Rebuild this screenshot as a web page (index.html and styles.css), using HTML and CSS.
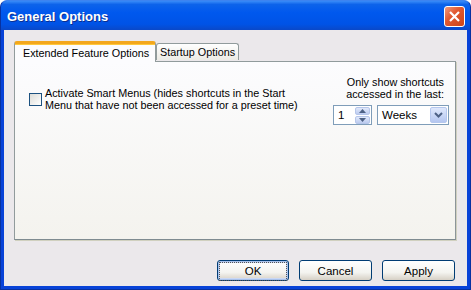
FILE: index.html
```html
<!doctype html>
<html lang="en">
    <head>
        <meta charset="utf-8">
        <title>General Options</title>
        <link rel="stylesheet" href="styles.css">
    </head>
    <body>
        <div class="window">
            <div class="window__title">
                <span class="window__caption">General Options</span>
                <div class="window__close">
                    <svg width="13" height="13" viewBox="0 0 13 13">
                        <path d="M2 2 L11 11 M11 2 L2 11" stroke="#fff" stroke-width="2.2"/>
                    </svg>
                </div>
            </div>
            <div class="window__client">
                <ul class="tabs">
                    <li class="tabs__item tabs__item--active">Extended Feature Options</li>
                    <li class="tabs__item">Startup Options</li>
                </ul>
                <div class="panel">
                    <label class="option">
                        <span class="option__box"></span>
                        <span class="option__text">Activate Smart Menus (hides shortcuts in the Start<br>Menu that have not been accessed for a preset time)</span>
                    </label>
                    <div class="period">
                        <div class="period__label">Only show shortcuts<br>accessed in the last:</div>
                        <div class="period__fields">
                            <div class="spin">
                                <span class="spin__value">1</span>
                                <div class="spin__buttons">
                                    <div class="spin__btn">
                                        <svg width="7" height="4" viewBox="0 0 7 4"><path d="M0 4 L3.5 0 L7 4 Z" fill="#4d6185"/></svg>
                                    </div>
                                    <div class="spin__btn">
                                        <svg width="7" height="4" viewBox="0 0 7 4"><path d="M0 0 L3.5 4 L7 0 Z" fill="#4d6185"/></svg>
                                    </div>
                                </div>
                            </div>
                            <div class="combo">
                                <span class="combo__value">Weeks</span>
                                <div class="combo__btn">
                                    <svg width="9" height="6" viewBox="0 0 9 6"><path d="M1 1 L4.5 4.5 L8 1" stroke="#4d6185" stroke-width="2" fill="none"/></svg>
                                </div>
                            </div>
                        </div>
                    </div>
                </div>
                <div class="actions">
                    <button class="btn btn--default"><span>OK</span></button>
                    <button class="btn"><span>Cancel</span></button>
                    <button class="btn"><span>Apply</span></button>
                </div>
            </div>
        </div>
    </body>
</html>
```

FILE: styles.css
```css
body {
    margin: 0;
    background: #fff;
    font-family: "Liberation Sans", Arial, sans-serif;
    font-size: 10.8px;
    color: #000;
}

.window {
    width: 471px;
    height: 290px;
    box-sizing: border-box;
    display: flex;
    flex-direction: column;
    background: #0842d8;
    border-radius: 7px 7px 0 0;
    border: 1px solid #0831a0;
    border-top-color: #3d84f0;
}

.window__title {
    height: 29px;
    display: flex;
    align-items: center;
    padding: 0 5px 0 6px;
    background: linear-gradient(#3a8cf8 0%, #0d63ea 12%, #0058ee 40%, #0053e6 80%, #0a48c8 100%);
    border-radius: 6px 6px 0 0;
}

.window__caption {
    flex: 1;
    font-family: "Liberation Sans", Arial, sans-serif;
    font-weight: bold;
    font-size: 13px;
    color: #fff;
    text-shadow: 1px 1px 0 #0b2f90;
    padding-top: 2px;
}

.window__close {
    width: 19px;
    height: 19px;
    display: flex;
    align-items: center;
    justify-content: center;
    border: 1px solid #fff;
    border-radius: 3px;
    background: linear-gradient(135deg, #f09a7e, #e25a32 40%, #cc4418);
    margin-top: 1px;
}

.window__client {
    flex: 1;
    margin: 0 3px 3px;
    background: #ebe8eb;
    padding: 12px 11px 0 10px;
    display: flex;
    flex-direction: column;
}

.tabs {
    display: flex;
    align-items: flex-end;
    list-style: none;
    margin: 0;
    padding: 0;
    height: 19px;
    position: relative;
    z-index: 1;
}

.tabs__item {
    box-sizing: border-box;
    height: 17px;
    padding: 2px 3px 0 3px;
    border: 1px solid #919b9c;
    border-bottom: none;
    border-radius: 3px 3px 0 0;
    background: linear-gradient(#fff, #ecebe5);
    margin-bottom: 1px;
}

.tabs__item--active {
    height: 21px;
    margin-bottom: -1px;
    padding: 3px 6px 0 8px;
    border-top: 3px solid #f3a71d;
    background: #fcfcfe;
    box-shadow: inset 0 1px 0 #ffc83c;
}

.panel {
    height: 179px;
    box-sizing: border-box;
    border: 1px solid #919b9c;
    border-right-color: #8c9599;
    border-bottom-color: #7f8b90;
    background: linear-gradient(#fcfcfe, #f4f3ee);
    display: flex;
    justify-content: space-between;
    padding: 13px 11px 0 14px;
    box-shadow: 1px 1px 0 #d0d0bf;
}

.option {
    display: flex;
    align-items: center;
    gap: 3px;
    align-self: flex-start;
    margin-top: 12px;
}

.option__box {
    width: 11px;
    height: 11px;
    border: 1px solid #1c5180;
    background: linear-gradient(135deg, #dcdcd7, #fff);
}

.option__text {
    line-height: 12px;
}

.period {
    display: flex;
    flex-direction: column;
    align-items: flex-end;
}

.period__label {
    text-align: right;
    line-height: 12px;
    padding-top: 1px;
}

.period__fields {
    display: flex;
    gap: 5px;
    margin-top: 5px;
    margin-right: -5px;
}

.spin {
    width: 39px;
    height: 20px;
    box-sizing: border-box;
    border: 1px solid #7f9db9;
    background: #fff;
    display: flex;
    justify-content: space-between;
    align-items: center;
    padding: 1px 1px 1px 4px;
}

.spin__value,
.combo__value {
    font-size: 11.5px;
}

.spin__buttons {
    display: flex;
    flex-direction: column;
    gap: 1px;
    height: 17px;
}

.spin__btn {
    width: 15px;
    height: 8px;
    display: flex;
    align-items: center;
    justify-content: center;
    background: linear-gradient(#e1e9fb, #bccbef);
    border: 1px solid #b6c6ea;
    box-sizing: border-box;
    border-radius: 2px;
}

.combo {
    width: 72px;
    height: 20px;
    box-sizing: border-box;
    border: 1px solid #7f9db9;
    background: #fff;
    display: flex;
    justify-content: space-between;
    align-items: center;
    padding: 1px 1px 1px 4px;
}

.combo__btn {
    width: 17px;
    height: 16px;
    box-sizing: border-box;
    display: flex;
    align-items: center;
    justify-content: center;
    background: linear-gradient(#dfe8fc, #b4c6f0);
    border: 1px solid #b5c7ee;
    border-radius: 2px;
}

.actions {
    display: flex;
    justify-content: flex-end;
    gap: 10px;
    margin-top: 20px;
    margin-right: 1px;
}

.btn {
    width: 73px;
    height: 21px;
    padding: 0;
    border: 1px solid #003c74;
    border-radius: 3px;
    background: linear-gradient(#fff, #f4f4f0 60%, #d6d0c5);
    font-family: "Liberation Sans", Arial, sans-serif;
    font-size: 11.5px;
    color: #000;
}

.btn span {
    display: block;
    line-height: 17px;
    margin: 1px;
    border: 1px solid transparent;
}

.btn--default {
    width: 72px;
    box-shadow: inset 0 0 0 1px #a8c2ec, inset 0 0 0 2px #cad8f4;
}

.btn--default span {
    border: 1px dotted #555;
}
```
